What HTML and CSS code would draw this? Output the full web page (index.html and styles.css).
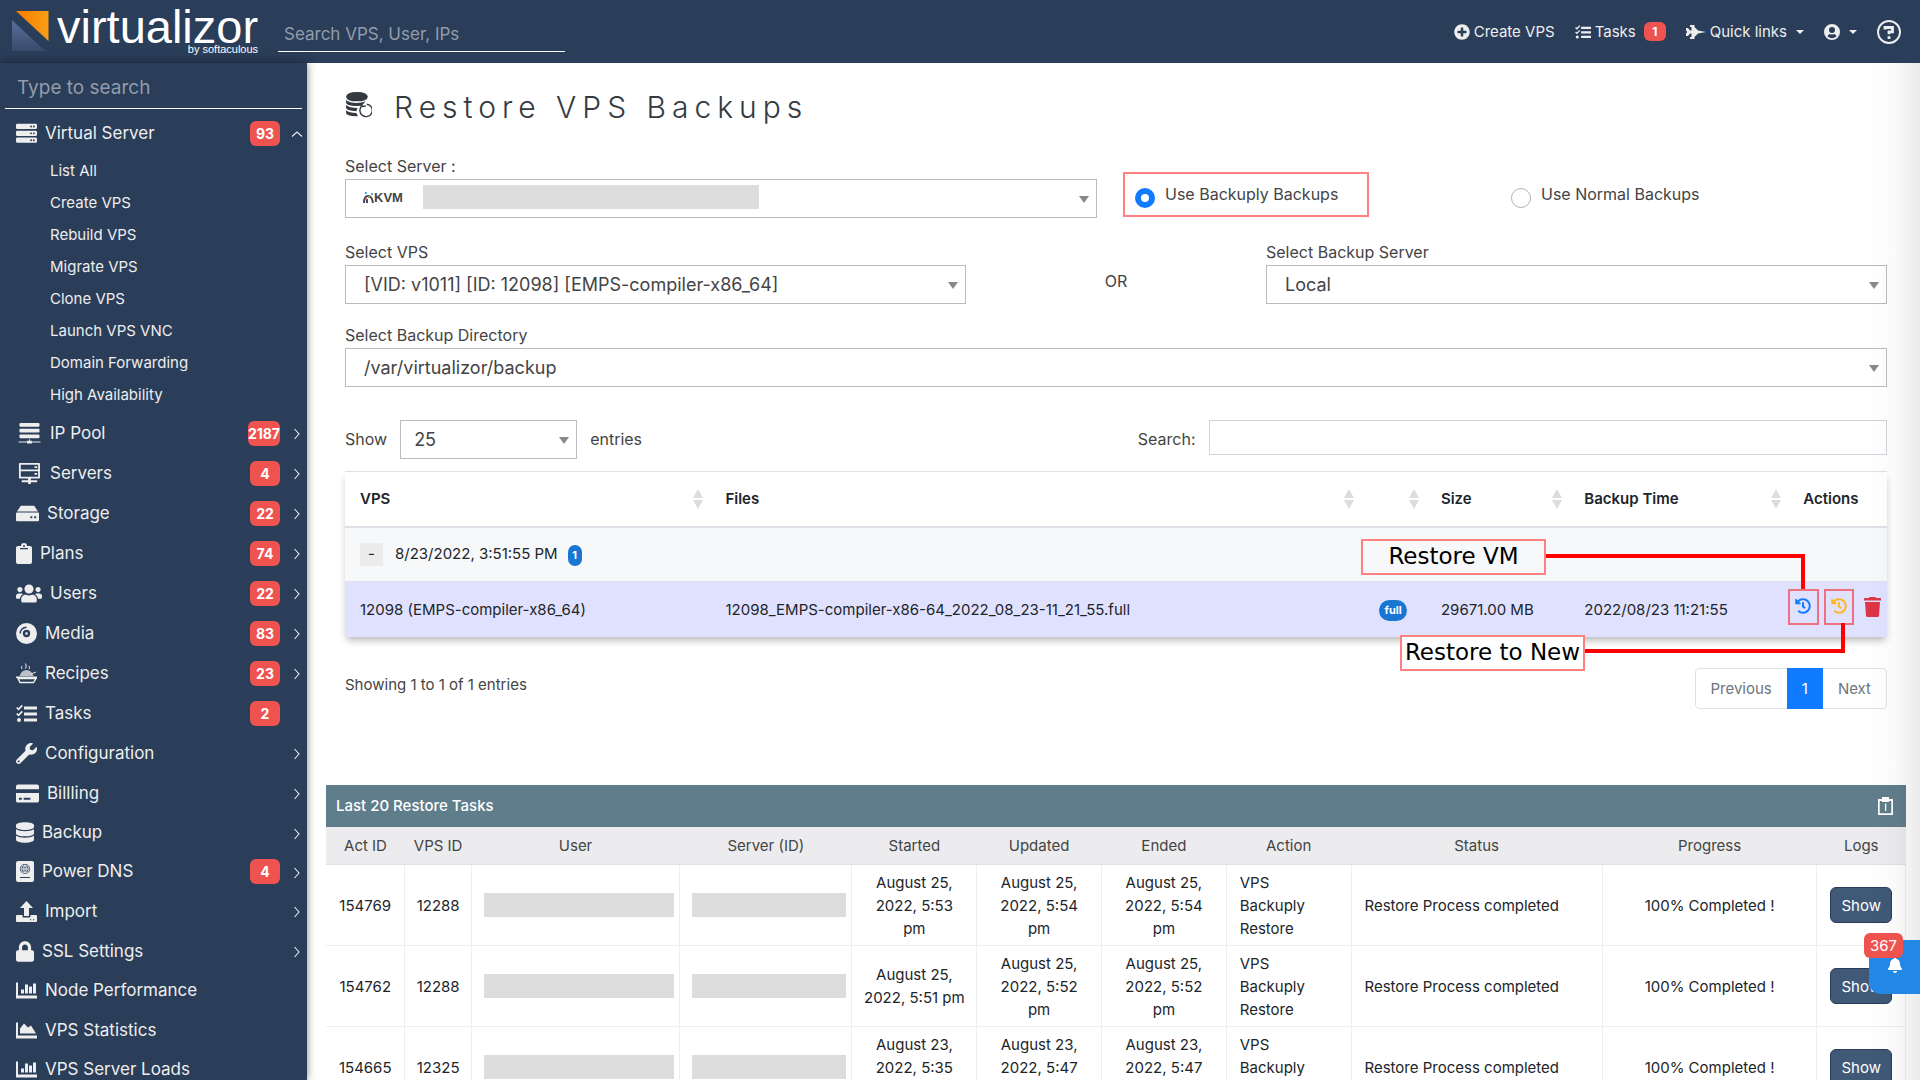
FILE: index.html
```html
<!DOCTYPE html>
<html lang="en">
<head>
    <meta charset="UTF-8">
    <meta name="viewport" content="width=device-width, initial-scale=1.0">
    <title>Restore VPS Backups</title>
    <link rel="stylesheet" href="styles.css">
</head>
<body>
    <svg class="sprite" aria-hidden="true">
        <symbol id="i-server" viewBox="0 0 512 512"><path fill-rule="evenodd" d="M32 20h448q32 0 32 32v64q0 32-32 32H32q-32 0-32-32V52q0-32 32-32zM32 188h448q32 0 32 32v64q0 32-32 32H32q-32 0-32-32v-64q0-32 32-32zM32 356h448q32 0 32 32v64q0 32-32 32H32q-32 0-32-32v-64q0-32 32-32zM345 84a23 23 0 1 0 46 0 23 23 0 1 0-46 0zM413 84a23 23 0 1 0 46 0 23 23 0 1 0-46 0zM345 252a23 23 0 1 0 46 0 23 23 0 1 0-46 0zM413 252a23 23 0 1 0 46 0 23 23 0 1 0-46 0zM345 420a23 23 0 1 0 46 0 23 23 0 1 0-46 0zM413 420a23 23 0 1 0 46 0 23 23 0 1 0-46 0z"/></symbol>
        <symbol id="i-pool" viewBox="0 0 24 22"><path d="M3 0h19a1 1 0 0 1 1 1v2a1 1 0 0 1-1 1H3a1 1 0 0 1-1-1V1a1 1 0 0 1 1-1zM3 6h19a1 1 0 0 1 1 1v2a1 1 0 0 1-1 1H3a1 1 0 0 1-1-1V7a1 1 0 0 1 1-1zM3 12h19a1 1 0 0 1 1 1v2a1 1 0 0 1-1 1H3a1 1 0 0 1-1-1v-2a1 1 0 0 1 1-1zM12 17h1v1.500h2v1h9v1h-9v1h-5v-1H1v-1h9v-1h2z"/></symbol>
        <symbol id="i-servers" viewBox="0 0 24 23"><path fill-rule="evenodd" d="M2 0h21q1 0 1 1v15q0 1-1 1H2q-1 0-1-1V1q0-1 1-1zm1 2v5h19V2zm0 7v6h19V9zM18 3.500h3v2h-3zM18 11h3v2h-3zM11 17h3v2h7v2h-7v2h-3v-2H4v-2h7z"/></symbol>
        <symbol id="i-hdd" viewBox="0 0 24 16"><path fill-rule="evenodd" d="M5 0h14l4 6H1zM1 7h22q1 0 1 1v7q0 1-1 1H1q-1 0-1-1V8q0-1 1-1zm14 4v2h2v-2zm4 0v2h2v-2z"/></symbol>
        <symbol id="i-clipboard" viewBox="0 0 16 21"><path fill-rule="evenodd" d="M2 3h3a3 3 0 0 1 6 0h3q2 0 2 2v14q0 2-2 2H2q-2 0-2-2V5q0-2 2-2zm6-1a1 1 0 1 0 0 2 1 1 0 0 0 0-2zM4 5v1.300h8V5z"/></symbol>
        <symbol id="i-users" viewBox="0 0 640 512"><path d="M96 224c35.300 0 64-28.700 64-64s-28.700-64-64-64-64 28.700-64 64 28.700 64 64 64zm448 0c35.300 0 64-28.700 64-64s-28.700-64-64-64-64 28.700-64 64 28.700 64 64 64zm32 32h-64c-17.600 0-33.500 7.100-45.100 18.600 40.300 22.100 68.900 62 75.100 109.400h66c17.700 0 32-14.300 32-32v-32c0-35.300-28.700-64-64-64zm-256 0c61.900 0 112-50.100 112-112S381.900 32 320 32 208 82.100 208 144s50.100 112 112 112zm76.800 32h-8.300c-20.800 10-43.900 16-68.500 16s-47.600-6-68.500-16h-8.300C179.600 288 128 339.600 128 403.200V432c0 26.500 21.500 48 48 48h288c26.500 0 48-21.500 48-48v-28.800c0-63.600-51.600-115.200-115.200-115.200zm-223.700-13.400C161.500 263.100 145.600 256 128 256H64c-35.300 0-64 28.700-64 64v32c0 17.700 14.300 32 32 32h65.900c6.300-47.400 34.900-87.300 75.200-109.400z"/></symbol>
        <symbol id="i-disc" viewBox="0 0 20 20"><path fill-rule="evenodd" d="M10 0a10 10 0 1 1 0 20 10 10 0 0 1 0-20zm0 6.500a3.500 3.500 0 1 0 0 7 3.500 3.500 0 0 0 0-7zm0 2.200a1.300 1.300 0 1 1 0 2.600 1.300 1.300 0 0 1 0-2.600zM3.300 10h1.400A5.300 5.300 0 0 1 10 4.700V3.300A6.700 6.700 0 0 0 3.300 10z"/></symbol>
        <symbol id="i-recipes" viewBox="0 0 21 21"><path d="M2 15.500h18l-2.500 4H4z" fill="none" stroke="currentColor" stroke-width="1.400"/><path d="M0 13.500h21v1.500H0z"/><path d="M3.500 13q2-6 7-6t7 6z" opacity=".75"/><path d="M6 6q-1-1.500 0-3M9.500 5.500q1.500-2.500 0-5M13 6q1-1.500 0-3M15 11l5-2" fill="none" stroke="currentColor"/></symbol>
        <symbol id="i-tasks" viewBox="0 0 21 18"><path d="M8 2h13v3H8zM8 8h13v3H8zM8 14h13v3H8z"/><circle cx="3" cy="15.500" r="2"/><path d="M.7 3l1.800 1.800L6.300.8M.7 9l1.800 1.800L6.300 6.800" fill="none" stroke="currentColor" stroke-width="1.700"/></symbol>
        <symbol id="i-wrench" viewBox="0 0 512 512"><path fill-rule="evenodd" d="M507.730 109.100c-2.240-9.030-13.540-12.090-20.120-5.510l-74.360 74.360-67.880-11.310-11.310-67.880 74.360-74.360c6.620-6.620 3.430-17.900-5.660-20.160-47.380-11.740-99.550.91-136.580 37.930-39.640 39.640-50.550 97.100-34.050 147.200L18.740 402.760c-24.990 24.990-24.990 65.510 0 90.500 24.990 24.990 65.510 24.990 90.500 0l213.210-213.210c50.120 16.710 107.470 5.680 147.370-34.220 37.070-37.070 49.700-89.320 37.910-136.730zM64 472c-13.250 0-24-10.750-24-24 0-13.260 10.750-24 24-24s24 10.740 24 24c0 13.250-10.750 24-24 24z"/></symbol>
        <symbol id="i-card" viewBox="0 0 24 19"><path fill-rule="evenodd" d="M2 0h20q2 0 2 2v3H0V2q0-2 2-2zM0 9h24v8q0 2-2 2H2q-2 0-2-2zm3 5v2h3v-2zm5 0v2h7v-2z"/></symbol>
        <symbol id="i-db" viewBox="0 0 448 512"><path d="M448 73.143v45.714C448 159.143 347.667 192 224 192S0 159.143 0 118.857V73.143C0 32.857 100.333 0 224 0s224 32.857 224 73.143zM448 176v102.857C448 319.143 347.667 352 224 352S0 319.143 0 278.857V176c48.125 33.143 136.208 48.572 224 48.572S399.874 209.143 448 176zm0 160v102.857C448 479.143 347.667 512 224 512S0 479.143 0 438.857V336c48.125 33.143 136.208 48.572 224 48.572S399.874 369.143 448 336z"/></symbol>
        <symbol id="i-dns" viewBox="0 0 18 21"><path fill-rule="evenodd" d="M2 0h14q2 0 2 2v17q0 2-2 2H2q-2 0-2-2V2q0-2 2-2zm7 3a5 5 0 1 0 0 10A5 5 0 0 0 9 3zM4 16v1h10v-1z"/><path d="M5.200 8h7.600M9 4.200v7.600M9 4.200q-4 3.800 0 7.600M9 4.200q4 3.800 0 7.600" fill="none" stroke="currentColor" stroke-width=".9"/><circle cx="9" cy="8" r="4" fill="none" stroke="currentColor" stroke-width=".8"/></symbol>
        <symbol id="i-upload" viewBox="0 0 21 21"><path fill-rule="evenodd" d="M10.500 0l6.500 7h-4v8H8V7H4zM1 14h5.500v1.500q0 1 1 1h6q1 0 1-1V14H20q1 0 1 1v5q0 1-1 1H1q-1 0-1-1v-5q0-1 1-1zm13 4.200v1h1.200v-1zm3 0v1h1.200v-1z"/></symbol>
        <symbol id="i-lock" viewBox="0 0 448 512"><path fill-rule="evenodd" d="M400 224h-24v-72C376 68.200 307.800 0 224 0S72 68.200 72 152v72H48c-26.500 0-48 21.500-48 48v192c0 26.500 21.500 48 48 48h352c26.500 0 48-21.500 48-48V272c0-26.500-21.500-48-48-48zm-104 0H152v-72c0-39.700 32.300-72 72-72s72 32.300 72 72v72z"/></symbol>
        <symbol id="i-bars" viewBox="0 0 21 16"><path d="M0 0h2v13h19v3H0zM5 7h3v4H5zM9 2h3v9H9zM13 4h3v7h-3zM17 1h3v10h-3z"/></symbol>
        <symbol id="i-area" viewBox="0 0 21 16"><path d="M0 0h2v13h19v3H0zM4 11V6l4-5 4 4 3-2 5 8z"/></symbol>
        <symbol id="i-chevron" viewBox="0 0 8 12"><path d="M1.500 1l4.500 5-4.500 5" fill="none" stroke="currentColor" stroke-width="1.100"/></symbol>
        <symbol id="i-plus" viewBox="0 0 512 512"><path fill-rule="evenodd" d="M256 8C119 8 8 119 8 256s111 248 248 248 248-111 248-248S393 8 256 8zm144 276c0 6.600-5.400 12-12 12h-92v92c0 6.600-5.400 12-12 12h-56c-6.600 0-12-5.400-12-12v-92h-92c-6.600 0-12-5.400-12-12v-56c0-6.600 5.400-12 12-12h92v-92c0-6.600 5.400-12 12-12h56c6.600 0 12 5.400 12 12v92h92c6.600 0 12 5.400 12 12v56z"/></symbol>
        <symbol id="i-jet" viewBox="0 0 20 16"><path d="M0 4h2l2 2.500h1.500V3H4V1h4.500v2l3.500 3.500L20 8l-8 1.500L8.500 13v2H4v-2h1.500V9.500H4L2 12H0V9.200l1-.4V7.200L0 6.800z"/></symbol>
        <symbol id="i-user" viewBox="0 0 16 16"><path fill-rule="evenodd" d="M8 0a8 8 0 1 1 0 16A8 8 0 0 1 8 0zm0 3a3 3 0 1 0 0 6 3 3 0 0 0 0-6zM3.500 12.200Q8 16.500 12.500 12.200 12 10.200 10 10q-2 1-4 0-2 .2-2.500 2.200z"/></symbol>
        <symbol id="i-help" viewBox="0 0 24 24"><circle cx="12" cy="12" r="11" fill="none" stroke="currentColor" stroke-width="1.900"/><path d="M8 9.500V7.500h7.500v4.300H12v2.400" fill="none" stroke="currentColor" stroke-width="2.800"/><path d="M10.600 16.200h2.800v2.800h-2.800z"/></symbol>
        <symbol id="i-history" viewBox="0 0 512 512"><path d="M504 255.531c.253 136.640-111.180 248.372-247.820 248.468-59.015.042-113.223-20.530-155.822-54.911-11.077-8.940-11.905-25.541-1.839-35.607l11.267-11.267c8.609-8.609 22.353-9.551 31.891-1.984C173.062 425.135 212.781 440 256 440c101.705 0 184-82.311 184-184 0-101.705-82.311-184-184-184-48.814 0-93.149 18.969-126.068 49.932l50.754 50.754c10.080 10.080 2.941 27.314-11.313 27.314H24c-8.837 0-16-7.163-16-16V38.627c0-14.254 17.234-21.393 27.314-11.314l49.372 49.372C129.209 34.136 189.552 8 256 8c136.810 0 247.747 110.780 248 247.531zm-180.912 78.784l9.823-12.630c8.138-10.463 6.253-25.542-4.210-33.679L288 256.349V152c0-13.255-10.745-24-24-24h-16c-13.255 0-24 10.745-24 24v135.651l65.409 50.874c10.463 8.137 25.541 6.253 33.679-4.210z"/></symbol>
        <symbol id="i-trash" viewBox="0 0 17 20"><path d="M5 1q0-1 1-1h5q1 0 1 1h4q1 0 1 1v1.500H0V2q0-1 1-1zM1 5h15l-1 13.500Q15 20 13.500 20h-10Q2 20 2 18.500z"/></symbol>
        <symbol id="i-bell" viewBox="0 0 448 512"><path d="M224 512c35.320 0 63.970-28.650 63.970-64H160.030c0 35.350 28.650 64 63.970 64zm215.390-149.710c-19.320-20.760-55.470-51.990-55.470-154.290 0-77.700-54.480-139.900-127.940-155.160V32c0-17.670-14.320-32-31.980-32s-31.980 14.330-31.980 32v20.840C118.560 68.100 64.080 130.300 64.080 208c0 102.300-36.150 133.530-55.470 154.290-6 6.450-8.660 14.160-8.610 21.710.11 16.400 12.980 32 32.100 32h383.800c19.120 0 32-15.600 32.100-32 .05-7.550-2.610-15.270-8.610-21.710z"/></symbol>
        <symbol id="i-sort" viewBox="0 0 10 20"><path d="M5 0l5 9H0zM0 11h10l-5 9z"/></symbol>
        <symbol id="i-restore" viewBox="0 0 26 25"><path d="M1 4.500Q1.500 0 11.500 0T22 4.500Q21.500 9 11.500 9T1 4.500zM1 7.700q3 2.800 10.500 2.800 5 0 8.500-1.500l-4 4.300-4.500.2Q1 13.200 1 10zM1 12.500q3 2.800 11 3l-1 3Q1 18.200 1 15zM1 17.500q3 2.500 10 2.800l1.500 3Q1 23.500 1 20z"/><path d="M21 11.700a6 6 0 1 1-4.500 1.300M15.500 10.500l1 3.500 3.500-.5" fill="none" stroke="currentColor" stroke-width="1.400"/></symbol>
        <symbol id="i-notes" viewBox="0 0 15 18"><path fill-rule="evenodd" d="M0 2h4V0h7v2h4v16H0zm1.700 2v12.300h11.600V4H11v1H4V4zM7 6.500h1.300v7.500H7z"/></symbol>
    </svg>

    <header class="topbar">
        <a class="logo" href="#">
            <svg class="logo-mark" viewBox="0 0 37 41">
                <defs>
                    <linearGradient id="orange" x1="0" x2="1"><stop offset="0" stop-color="#f57c00"/><stop offset="1" stop-color="#fb9d14"/></linearGradient>
                    <linearGradient id="slate" x1="0" y1="0" x2="0" y2="1"><stop offset="0" stop-color="#5b6f9a"/><stop offset="1" stop-color="#384b6c"/></linearGradient>
                </defs>
                <path d="M4 1h32.500v30z" fill="url(#orange)"/>
                <path d="M0 10l33 31H0z" fill="url(#slate)"/>
            </svg>
            <span class="logo-text">
                <span class="logo-name">virtualizor</span>
                <span class="logo-by">by softaculous</span>
            </span>
        </a>
        <input class="top-search" type="text" placeholder="Search VPS, User, IPs" aria-label="Search VPS, User, IPs">
        <nav class="top-links">
            <a href="#"><svg class="icon-16"><use href="#i-plus"/></svg>Create VPS</a>
            <a href="#"><svg class="icon-16"><use href="#i-tasks"/></svg>Tasks<span class="badge badge-small">1</span></a>
            <a href="#"><svg class="icon-20"><use href="#i-jet"/></svg>Quick links<span class="caret"></span></a>
            <a href="#" aria-label="Account"><svg class="icon-16"><use href="#i-user"/></svg><span class="caret"></span></a>
            <a href="#" aria-label="Help"><svg class="icon-24"><use href="#i-help"/></svg></a>
        </nav>
    </header>

    <div class="layout">
        <aside class="sidebar">
            <input class="side-search" type="text" placeholder="Type to search" aria-label="Type to search">
            <ul class="menu">
                <li><a href="#"><svg class="w21"><use href="#i-server"/></svg>Virtual Server<span class="badge">93</span><svg class="chevron chevron-up"><use href="#i-chevron"/></svg></a>
                    <ul class="submenu">
                        <li><a href="#">List All</a></li>
                        <li><a href="#">Create VPS</a></li>
                        <li><a href="#">Rebuild VPS</a></li>
                        <li><a href="#">Migrate VPS</a></li>
                        <li><a href="#">Clone VPS</a></li>
                        <li><a href="#">Launch VPS VNC</a></li>
                        <li><a href="#">Domain Forwarding</a></li>
                        <li><a href="#">High Availability</a></li>
                    </ul>
                </li>
                <li><a href="#"><svg class="w26"><use href="#i-pool"/></svg>IP Pool<span class="badge">2187</span><svg class="chevron"><use href="#i-chevron"/></svg></a></li>
                <li><a href="#"><svg class="w26"><use href="#i-servers"/></svg>Servers<span class="badge">4</span><svg class="chevron"><use href="#i-chevron"/></svg></a></li>
                <li><a href="#"><svg class="w23"><use href="#i-hdd"/></svg>Storage<span class="badge">22</span><svg class="chevron"><use href="#i-chevron"/></svg></a></li>
                <li><a href="#"><svg class="w16"><use href="#i-clipboard"/></svg>Plans<span class="badge">74</span><svg class="chevron"><use href="#i-chevron"/></svg></a></li>
                <li><a href="#"><svg class="w26"><use href="#i-users"/></svg>Users<span class="badge">22</span><svg class="chevron"><use href="#i-chevron"/></svg></a></li>
                <li><a href="#"><svg class="w21"><use href="#i-disc"/></svg>Media<span class="badge">83</span><svg class="chevron"><use href="#i-chevron"/></svg></a></li>
                <li><a href="#"><svg class="w21"><use href="#i-recipes"/></svg>Recipes<span class="badge">23</span><svg class="chevron"><use href="#i-chevron"/></svg></a></li>
                <li><a href="#"><svg class="w21"><use href="#i-tasks"/></svg>Tasks<span class="badge badge-last">2</span></a></li>
                <li><a href="#"><svg class="w21"><use href="#i-wrench"/></svg>Configuration<svg class="chevron"><use href="#i-chevron"/></svg></a></li>
                <li><a href="#"><svg class="w23"><use href="#i-card"/></svg>Billling<svg class="chevron"><use href="#i-chevron"/></svg></a></li>
                <li class="short"><a href="#"><svg class="w18"><use href="#i-db"/></svg>Backup<svg class="chevron"><use href="#i-chevron"/></svg></a></li>
                <li class="short"><a href="#"><svg class="w18"><use href="#i-dns"/></svg>Power DNS<span class="badge">4</span><svg class="chevron"><use href="#i-chevron"/></svg></a></li>
                <li><a href="#"><svg class="w21"><use href="#i-upload"/></svg>Import<svg class="chevron"><use href="#i-chevron"/></svg></a></li>
                <li><a href="#"><svg class="w18"><use href="#i-lock"/></svg>SSL Settings<svg class="chevron"><use href="#i-chevron"/></svg></a></li>
                <li class="short"><a href="#"><svg class="w21"><use href="#i-bars"/></svg>Node Performance</a></li>
                <li><a href="#"><svg class="w21"><use href="#i-area"/></svg>VPS Statistics</a></li>
                <li class="short"><a href="#"><svg class="w21"><use href="#i-bars"/></svg>VPS Server Loads</a></li>
            </ul>
        </aside>

        <main class="content">
            <section class="restore">
                <h1><svg class="title-icon"><use href="#i-restore"/></svg>Restore VPS Backups</h1>

                <div class="row row-server">
                    <div class="field">
                        <label for="server">Select Server :</label>
                        <div class="select-box">
                            <select id="server"><option></option></select>
                            <span class="server-value">
                                <svg class="kvm-mark" viewBox="0 0 11 13"><path d="M2 1h2v2H2zM8 2h2v2H8z" fill="#5aa6d6"/><path d="M1 12q0-7 4-7t5 7M4 12V8" fill="none" stroke="#54455c" stroke-width="2"/><path d="M5 5h2v2H5z" fill="#7da453"/><path d="M2 7h2v2H2z" fill="#b7726a"/></svg>
                                <span class="kvm">KVM</span>
                                <span class="redacted"></span>
                            </span>
                        </div>
                    </div>
                    <label class="radio radio-marked"><input type="radio" name="type" checked>Use Backuply Backups</label>
                    <label class="radio"><input type="radio" name="type">Use Normal Backups</label>
                </div>

                <div class="row row-vps">
                    <div class="field">
                        <label for="vps">Select VPS</label>
                        <div class="select-box">
                            <select id="vps"><option>[VID: v1011] [ID: 12098] [EMPS-compiler-x86_64]</option></select>
                        </div>
                    </div>
                    <span class="or">OR</span>
                    <div class="field">
                        <label for="backup-server">Select Backup Server</label>
                        <div class="select-box">
                            <select id="backup-server"><option>Local</option></select>
                        </div>
                    </div>
                </div>

                <div class="field">
                    <label for="dir">Select Backup Directory</label>
                    <div class="select-box">
                        <select id="dir"><option>/var/virtualizor/backup</option></select>
                    </div>
                </div>

                <div class="table-tools">
                    <label class="length" for="length">Show</label>
                    <div class="select-box select-small">
                        <select id="length"><option>25</option></select>
                    </div>
                    <span>entries</span>
                    <label class="filter" for="filter">Search:</label>
                    <input id="filter" type="search">
                </div>

                <div class="backup-wrap">
                    <table class="backups">
                        <colgroup>
                            <col class="c-vps"><col class="c-files"><col class="c-type"><col class="c-size"><col class="c-time"><col class="c-actions">
                        </colgroup>
                        <thead>
                            <tr>
                                <th><span>VPS<svg><use href="#i-sort"/></svg></span></th>
                                <th><span>Files<svg><use href="#i-sort"/></svg></span></th>
                                <th><span><svg><use href="#i-sort"/></svg></span></th>
                                <th><span>Size<svg><use href="#i-sort"/></svg></span></th>
                                <th><span>Backup Time<svg><use href="#i-sort"/></svg></span></th>
                                <th>Actions</th>
                            </tr>
                        </thead>
                        <tbody>
                            <tr class="group">
                                <td colspan="6"><button type="button" class="collapse">-</button>8/23/2022, 3:51:55 PM<span class="pill">1</span></td>
                            </tr>
                            <tr class="file">
                                <td>12098 (EMPS-compiler-x86_64)</td>
                                <td>12098_EMPS-compiler-x86-64_2022_08_23-11_21_55.full</td>
                                <td><span class="pill pill-full">full</span></td>
                                <td>29671.00 MB</td>
                                <td>2022/08/23 11:21:55</td>
                                <td class="actions">
                                    <div>
                                        <button type="button" class="marked blue" aria-label="Restore VM"><svg class="icon-16"><use href="#i-history"/></svg></button>
                                        <button type="button" class="marked amber" aria-label="Restore to New"><svg class="icon-16"><use href="#i-history"/></svg></button>
                                        <button type="button" class="delete" aria-label="Delete"><svg><use href="#i-trash"/></svg></button>
                                    </div>
                                </td>
                            </tr>
                        </tbody>
                    </table>
                    <!-- callouts drawn over the table -->
                    <div class="callout callout-vm"><span>Restore VM</span></div>
                    <div class="lead lead-vm"></div>
                    <div class="callout callout-new"><span>Restore to New</span></div>
                    <div class="lead lead-new"></div>
                </div>

                <div class="table-footer">
                    <span>Showing 1 to 1 of 1 entries</span>
                    <nav class="pages">
                        <a href="#">Previous</a><a href="#" class="current">1</a><a href="#">Next</a>
                    </nav>
                </div>
            </section>

            <section class="tasks">
                <header class="tasks-head">
                    <h2>Last 20 Restore Tasks</h2>
                    <svg><use href="#i-notes"/></svg>
                </header>
                <table>
                    <colgroup>
                        <col class="t-act"><col class="t-vps"><col class="t-user"><col class="t-server"><col class="t-date"><col class="t-date"><col class="t-date"><col class="t-date"><col class="t-status"><col class="t-progress"><col class="t-logs">
                    </colgroup>
                    <thead>
                        <tr><th>Act ID</th><th>VPS ID</th><th>User</th><th>Server (ID)</th><th>Started</th><th>Updated</th><th>Ended</th><th>Action</th><th>Status</th><th>Progress</th><th>Logs</th></tr>
                    </thead>
                    <tbody>
                        <tr>
                            <td>154769</td><td>12288</td>
                            <td class="hide"><span class="redacted"></span></td><td class="hide"><span class="redacted"></span></td>
                            <td>August 25,<br>2022, 5:53<br>pm</td><td>August 25,<br>2022, 5:54<br>pm</td><td>August 25,<br>2022, 5:54<br>pm</td>
                            <td class="left">VPS<br>Backuply<br>Restore</td><td class="left">Restore Process completed</td><td>100% Completed !</td>
                            <td><button type="button" class="show">Show</button></td>
                        </tr>
                        <tr>
                            <td>154762</td><td>12288</td>
                            <td class="hide"><span class="redacted"></span></td><td class="hide"><span class="redacted"></span></td>
                            <td>August 25,<br>2022, 5:51 pm</td><td>August 25,<br>2022, 5:52<br>pm</td><td>August 25,<br>2022, 5:52<br>pm</td>
                            <td class="left">VPS<br>Backuply<br>Restore</td><td class="left">Restore Process completed</td><td>100% Completed !</td>
                            <td><button type="button" class="show">Show</button></td>
                        </tr>
                        <tr>
                            <td>154665</td><td>12325</td>
                            <td class="hide"><span class="redacted"></span></td><td class="hide"><span class="redacted"></span></td>
                            <td>August 23,<br>2022, 5:35<br>pm</td><td>August 23,<br>2022, 5:47<br>pm</td><td>August 23,<br>2022, 5:47<br>pm</td>
                            <td class="left">VPS<br>Backuply<br>Restore</td><td class="left">Restore Process completed</td><td>100% Completed !</td>
                            <td><button type="button" class="show">Show</button></td>
                        </tr>
                    </tbody>
                </table>
            </section>
        </main>
        <div class="edge-shade"></div>
    </div>

    <button type="button" class="notify" aria-label="Notifications">
        <span class="badge">367</span>
        <svg><use href="#i-bell"/></svg>
    </button>
</body>
</html>
```
FILE: styles.css
```css
* {
    box-sizing: border-box;
}
body {
    margin: 0;
    height: 100vh;
    display: flex;
    flex-direction: column;
    overflow: hidden;
    font-family: Inter, "Open Sans", sans-serif;
    font-size: 16px;
    line-height: 23px;
    color: #444;
    background-color: #fff;
}
a {
    color: inherit;
    text-decoration: none;
}
button, input, select {
    font: inherit;
    color: inherit;
}
svg {
    fill: currentColor;
    flex: none;
}
.sprite {
    position: absolute;
    width: 0;
    height: 0;
}
.icon-16 {
    width: 16px;
    height: 16px;
}
.icon-20 {
    width: 20px;
    height: 16px;
}
.icon-24 {
    width: 24px;
    height: 24px;
}
.badge {
    display: inline-block;
    min-width: 30px;
    height: 25px;
    border-radius: 6px;
    background-color: #ef5350;
    color: #fff;
    font-size: 14px;
    font-weight: 700;
    line-height: 25px;
    text-align: center;
}
.redacted {
    display: block;
    height: 24px;
    background-color: #ddd;
}

/* top bar */
.topbar {
    display: flex;
    height: 63px;
    flex: none;
    padding: 0 19px 0 12px;
    background-color: #2a3d59;
    color: #eee;
}
.logo {
    display: flex;
    gap: 8px;
    width: 266px;
    padding-top: 10px;
    color: #fff;
    font-family: "Liberation Sans", Arial, sans-serif;
}
.logo-mark {
    width: 37px;
    height: 41px;
}
.logo-text {
    display: flex;
    flex-direction: column;
    align-items: flex-end;
}
.logo-name {
    font-size: 47px;
    line-height: 33px;
}
.logo-by {
    font-size: 11px;
    line-height: 12px;
}
.top-search, .side-search {
    border: none;
    border-bottom: 1px solid #fff;
    background: none;
    outline: none;
    color: #fff;
    font-size: 17px;
}
.top-search {
    width: 287px;
    height: 36px;
    margin-top: 16px;
    padding: 0 6px;
}
.top-search::placeholder, .side-search::placeholder {
    color: #929cab;
}
.top-links {
    display: flex;
    align-items: center;
    gap: 20px;
    margin-left: auto;
    font-size: 15px;
}
.top-links a {
    display: flex;
    align-items: center;
    gap: 4px;
}
.badge-small {
    min-width: 22px;
    height: 19px;
    margin-left: 4px;
    font-size: 12px;
    line-height: 19px;
}
.caret {
    margin-left: 5px;
    border: 4px solid transparent;
    border-top-color: #eee;
    border-bottom-width: 0;
}

/* sidebar */
.layout {
    display: flex;
    flex: 1;
    min-height: 0;
    position: relative;
}
.sidebar {
    width: 307px;
    flex: none;
    padding: 0 5px;
    background-color: #2a3d59;
    box-shadow: 0 0 8px rgba(0, 0, 0, 0.5);
    color: #eee;
    overflow: hidden;
    z-index: 1;
}
.side-search {
    display: block;
    width: 100%;
    height: 46px;
    padding: 4px 12px 0;
    font-size: 19px;
}
.menu, .submenu {
    list-style: none;
    margin: 0;
    padding: 0;
}
.menu {
    padding-top: 4px;
    font-size: 17px;
}
.menu > li > a {
    display: flex;
    align-items: center;
    height: 40px;
    padding: 0 1px 0 11px;
}
.menu > .short > a {
    height: 39px;
}
.menu a svg {
    height: 21px;
    margin-right: 8px;
}
.w16 {
    width: 16px;
}
.w18 {
    width: 18px;
}
.w21 {
    width: 21px;
}
.w23 {
    width: 23px;
}
.w26 {
    width: 26px;
}
.menu .badge {
    margin-left: auto;
}
.menu .badge-last {
    margin-right: 21px;
}
.menu a .chevron {
    width: 8px;
    height: 12px;
    margin: 2px 0 0 auto;
}
.menu .badge + .chevron {
    margin-left: 13px;
}
.chevron-up {
    transform: rotate(-90deg);
}
.submenu {
    padding: 2px 0 2px 45px;
    font-size: 15px;
}
.submenu a {
    display: block;
    height: 32px;
    line-height: 32px;
}

/* restore form */
.content {
    flex: 1;
    min-width: 0;
    overflow: hidden;
    background-color: #fff;
}
.restore {
    padding: 24px 33px 0 38px;
}
h1 {
    display: flex;
    align-items: center;
    gap: 22px;
    height: 40px;
    margin: 0 0 26px;
    font-size: 30px;
    font-weight: 300;
    letter-spacing: 6px;
    color: #343a40;
}
.title-icon {
    width: 27px;
    height: 26px;
    margin-bottom: 4px;
}
.row {
    display: grid;
    margin-bottom: 21px;
}
.row-server {
    grid-template-columns: 752fr 26fr 376fr 388fr;
}
.row-server .radio-marked {
    grid-column: 3;
}
.row-vps {
    grid-template-columns: 621fr 300fr 621fr;
    margin-bottom: 18px;
}
.field label {
    display: block;
    height: 26px;
    line-height: 27px;
}
.select-box {
    position: relative;
}
.select-box::after {
    content: "";
    position: absolute;
    right: 8px;
    top: 17px;
    border: 5px solid transparent;
    border-top: 7px solid #888;
    border-bottom: none;
    pointer-events: none;
}
.select-box select {
    appearance: none;
    width: 100%;
    height: 39px;
    padding: 0 18px;
    border: 1px solid #bbb;
    border-radius: 0;
    background-color: #fff;
    font-size: 18px;
}
.server-value {
    position: absolute;
    left: 18px;
    top: 6px;
    display: flex;
    align-items: center;
    pointer-events: none;
}
.server-value .redacted {
    width: 336px;
    margin-left: 20px;
}
.kvm-mark {
    width: 11px;
    height: 13px;
}
.kvm {
    font-family: "Liberation Sans Narrow", "Liberation Sans", sans-serif;
    font-size: 13px;
    font-weight: 700;
}
.radio {
    display: flex;
    align-self: start;
    justify-self: start;
    gap: 10px;
    height: 45px;
    margin-top: 19px;
    padding: 10px;
    border: 2px solid transparent;
    line-height: 20px;
}
.radio-marked {
    width: 246px;
    border-color: #ff8080;
}
.radio input {
    appearance: none;
    width: 20px;
    height: 20px;
    margin: 4px 0 0;
    border: 1px solid #adb5bd;
    border-radius: 50%;
    background-color: #fff;
}
.radio input:checked {
    border: 6px solid #107bff;
}
.or {
    justify-self: center;
    align-self: center;
    padding-top: 20px;
}

/* backups table */
.table-tools {
    display: flex;
    align-items: center;
    height: 39px;
    margin: 33px 0 12px;
}
.select-small {
    width: 177px;
    margin: 0 13px;
}
.select-small select {
    padding-left: 13px;
}
.table-tools .filter {
    margin-left: auto;
    margin-right: 13px;
}
.table-tools input {
    width: 44%;
    height: 35px;
    margin-bottom: 4px;
    border: 1px solid #ced4da;
    background-color: #fff;
}
table {
    width: 100%;
    border-collapse: collapse;
    table-layout: fixed;
}
.backup-wrap {
    position: relative;
}
.backups {
    color: #212529;
    box-shadow: 0 5px 8px -2px rgba(0, 0, 0, 0.3);
}
.c-vps {
    width: 23.7%;
}
.c-files {
    width: 42.2%;
}
.c-type {
    width: 4.2%;
}
.c-size {
    width: 9.3%;
}
.c-time {
    width: 14.2%;
}
.c-actions {
    width: 6.4%;
}
.backups th, .backups td {
    height: 55px;
    padding: 0 15px;
    border-top: 1px solid #dee2e6;
    text-align: left;
    font-size: 15px;
    white-space: nowrap;
}
.backups th {
    border-bottom: 2px solid #dee2e6;
    padding-right: 7px;
    font-weight: 600;
}
.backups th span {
    display: flex;
    align-items: center;
    justify-content: space-between;
}
.backups th svg {
    width: 10px;
    height: 20px;
    margin-left: auto;
    color: #ddd;
}
.group {
    background-color: #f6f8fa;
}
.file {
    background-color: #e0e1ff;
}
.collapse {
    width: 23px;
    height: 23px;
    margin-right: 12px;
    padding: 0;
    border: none;
    background-color: #ececec;
    line-height: 20px;
}
.pill {
    display: inline-block;
    min-width: 14px;
    height: 21px;
    margin-left: 10px;
    border-radius: 11px;
    background-color: #1976d2;
    color: #fff;
    font-size: 11px;
    font-weight: 700;
    line-height: 21px;
    text-align: center;
}
.pill-full {
    width: 28px;
    margin-left: 3px;
}
.backups .actions {
    padding: 0 6px 4px 0;
}
.actions div {
    display: flex;
    align-items: center;
    justify-content: flex-end;
    gap: 5px;
}
.actions button {
    display: flex;
    justify-content: center;
    width: 32px;
    height: 36px;
    padding: 7px 0;
    border: 2px solid rgba(255, 0, 0, 0.5);
    background: none;
}
.actions .delete {
    width: 17px;
    margin-left: 5px;
    padding: 8px 0;
    border: none;
    color: #dc3545;
}
.delete svg {
    width: 17px;
    height: 20px;
}
.blue {
    color: #107bff;
}
.actions .amber {
    color: #fbb81f;
}
.callout {
    position: absolute;
    width: 185px;
    height: 36px;
    border: 2px solid #ff8080;
    color: #000;
    font-family: "DejaVu Sans", sans-serif;
    font-size: 23px;
    line-height: 30px;
    text-align: center;
    white-space: nowrap;
}
.callout-vm {
    right: 341px;
    top: 68px;
}
.callout-new {
    right: 302px;
    top: 164px;
    background-color: #fff;
}
.lead {
    position: absolute;
    border: 4px solid #f00;
    border-left: none;
}
.lead-vm {
    right: 82px;
    top: 83px;
    width: 259px;
    height: 35px;
    border-bottom: none;
}
.lead-new {
    right: 42px;
    top: 152px;
    width: 260px;
    height: 30px;
    border-top: none;
}
.table-footer {
    display: flex;
    justify-content: space-between;
    margin: 31px 0 76px;
    font-size: 15px;
}
.table-footer > span {
    padding-top: 5px;
}
.pages {
    display: flex;
    border: 1px solid #dee2e6;
    border-radius: 4px;
    color: #6c757d;
}
.pages a {
    padding: 8px 15px;
}
.pages .current {
    margin: -1px 0;
    padding: 9px 15px;
    background-color: #107bff;
    color: #fff;
}

/* task log */
.tasks {
    margin: 0 14px 0 19px;
    font-size: 15px;
}
.tasks-head {
    display: flex;
    align-items: center;
    justify-content: space-between;
    height: 42px;
    padding: 0 13px 0 10px;
    background-color: #607d8b;
    color: #fff;
}
.tasks-head h2 {
    margin: 0;
    font-size: 15px;
    font-weight: 500;
}
.tasks-head svg {
    width: 15px;
    height: 18px;
}
.t-act {
    width: 5%;
}
.t-vps {
    width: 4.2%;
}
.t-user {
    width: 13.2%;
}
.t-server {
    width: 10.9%;
}
.t-date {
    width: 7.9%;
}
.t-status {
    width: 15.9%;
}
.t-progress {
    width: 13.6%;
}
.t-logs {
    width: 5.6%;
}
.tasks th {
    height: 38px;
    padding: 0;
    border-bottom: 1px solid #dee2e6;
    background-color: #ececee;
    font-weight: 400;
}
.tasks td {
    height: 81px;
    padding: 0;
    border: 1px solid #eee;
    border-left: none;
    color: #212529;
    text-align: center;
}
.tasks .left {
    padding-left: 13px;
    text-align: left;
}
.tasks .hide {
    padding: 0 5px 0 12px;
}
.show {
    width: 62px;
    height: 36px;
    padding: 0;
    border: 1px solid #2a3d59;
    border-radius: 6px;
    background-color: #3f5977;
    color: #fff;
    font-size: 15px;
}

/* overlays at the right edge */
.edge-shade {
    position: absolute;
    top: 0;
    right: 0;
    bottom: 0;
    width: 50px;
    background: linear-gradient(to right, rgba(0, 0, 0, 0), rgba(0, 0, 0, 0.02) 50%, rgba(0, 0, 0, 0.08));
    pointer-events: none;
}
.notify {
    position: fixed;
    right: 0;
    top: 940px;
    z-index: 2;
    width: 51px;
    height: 54px;
    padding: 0;
    border: none;
    border-radius: 0 0 0 12px;
    background-color: #2388e5;
    color: #fff;
}
.notify svg {
    width: 14px;
    height: 16px;
}
.notify .badge {
    position: absolute;
    left: -5px;
    top: -7px;
    width: 39px;
    font-size: 15px;
    font-weight: 400;
}
```
